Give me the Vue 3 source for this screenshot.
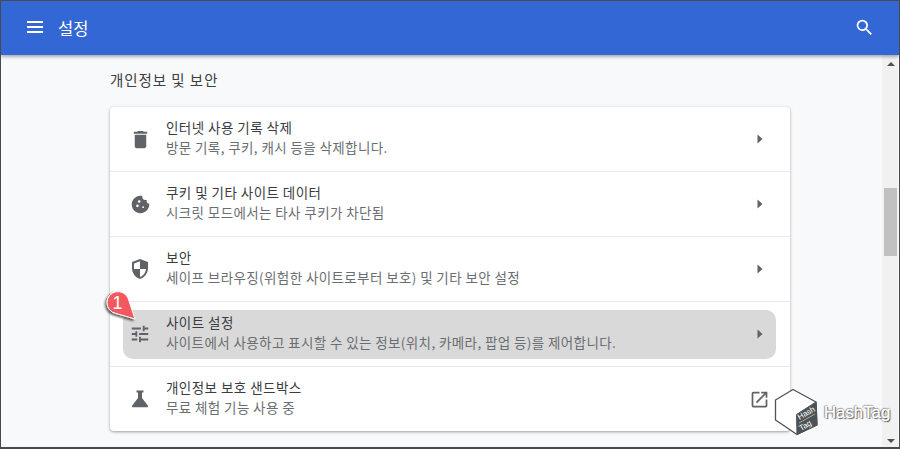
<script setup>
const rows = [
  { id: 'trash', title: '인터넷 사용 기록 삭제', sub: '방문 기록, 쿠키, 캐시 등을 삭제합니다.' },
  { id: 'cookie', title: '쿠키 및 기타 사이트 데이터', sub: '시크릿 모드에서는 타사 쿠키가 차단됨' },
  { id: 'shield', title: '보안', sub: '세이프 브라우징(위험한 사이트로부터 보호) 및 기타 보안 설정' },
  { id: 'tune', title: '사이트 설정', sub: '사이트에서 사용하고 표시할 수 있는 정보(위치, 카메라, 팝업 등)를 제어합니다.', active: true },
  { id: 'flask', title: '개인정보 보호 샌드박스', sub: '무료 체험 기능 사용 중', external: true },
]
</script>

<template>
  <div class="win">
    <header class="top">
      <svg class="menu" viewBox="0 0 16 12" width="16" height="12"><path d="M0 0h16v2H0zM0 5h16v2H0zM0 10h16v2H0z" fill="#fff"/></svg>
      <span class="heading">설정</span>
      <svg class="search" viewBox="0 0 24 24" width="21" height="21"><path d="M15.500 14h-.79l-.28-.27A6.470 6.470 0 0 0 16 9.500 6.500 6.500 0 1 0 9.500 16c1.610 0 3.090-.59 4.230-1.570l.27.28v.79l5 4.990L20.490 19l-4.990-5zm-6 0C7.010 14 5 11.990 5 9.500S7.010 5 9.500 5 14 7.010 14 9.500 11.990 14 9.500 14z" fill="#fff"/></svg>
    </header>
    <div class="body">
      <main class="content">
        <h2 class="section">개인정보 및 보안</h2>
        <section class="card">
          <div v-for="r in rows" :key="r.id" class="row">
            <div class="inner" :class="{ active: r.active }">
              <span class="icbox">
                <svg class="ic" :class="'ic-' + r.id" viewBox="0 0 24 24">
                  <path v-if="r.id === 'trash'" d="M6 19c0 1.100.9 2 2 2h8c1.100 0 2-.9 2-2V7H6v12zM19 4h-3.500l-1-1h-5l-1 1H5v2h14V4z"/>
                  <path v-else-if="r.id === 'cookie'" fill-rule="evenodd" d="M21.950 10.990c-1.790-.03-3.700-1.950-2.680-4.220-2.970 1-5.780-1.590-5.190-4.560C7.110.74 2 6.410 2 12c0 5.520 4.480 10 10 10 5.890 0 10.540-5.080 9.950-11.010zM8.500 15a1.500 1.500 0 1 1 0-3 1.500 1.500 0 0 1 0 3zm2-5a1.500 1.500 0 1 1 0-3 1.500 1.500 0 0 1 0 3zm4.500 6a1 1 0 1 1 0-2 1 1 0 0 1 0 2z"/>
                  <path v-else-if="r.id === 'shield'" fill-rule="evenodd" d="M12 2 4 5v6.090c0 5.050 3.410 9.760 8 10.910 4.590-1.150 8-5.860 8-10.910V5l-8-3zM12 4.200 6 6.400V12h6V4.200zM12 12v7.900c3.200-1 5.700-4.300 6-7.900h-6z"/>
                  <path v-else-if="r.id === 'tune'" d="M3 17v2h6v-2H3zM3 5v2h10V5H3zm10 16v-2h8v-2h-8v-2h-2v6h2zM7 9v2H3v2h4v2h2V9H7zm14 4v-2H11v2h10zm-6-4h2V7h4V5h-4V3h-2v6z"/>
                  <path v-else d="M8.500 3.500h7v2H14V11l5.800 7.500c.6.900 0 1.800-.8 1.800H5c-.8 0-1.400-.9-.8-1.800L10 11V5.500H8.500z"/>
                </svg>
              </span>
              <div class="text">
                <div class="title">{{ r.title }}</div>
                <div class="sub">{{ r.sub }}</div>
              </div>
              <svg v-if="r.external" class="ext" viewBox="0 0 24 24"><path d="M19 19H5V5h7V3H5a2 2 0 0 0-2 2v14a2 2 0 0 0 2 2h14c1.100 0 2-.9 2-2v-7h-2v7zM14 3v2h3.590l-9.830 9.830 1.410 1.410L19 6.410V10h2V3h-7z"/></svg>
              <svg v-else class="arrow" viewBox="0 0 8 10" width="8" height="10"><path d="M1.500 0.500 6.500 5 1.500 9.500z"/></svg>
            </div>
          </div>
        </section>
      </main>
      <aside class="scroll">
        <svg class="sa up" viewBox="0 0 10 5" width="8" height="4"><path d="M5 0 10 5H0z"/></svg>
        <div class="thumb"></div>
        <svg class="sa down" viewBox="0 0 10 5" width="8" height="4"><path d="M0 0h10L5 5z"/></svg>
      </aside>
    </div>
    <svg class="badge" viewBox="0 0 44 40" width="44" height="40">
      <defs>
        <filter id="bs" x="-30%" y="-30%" width="160%" height="160%"><feDropShadow dx="-1.500" dy="1.500" stdDeviation="1.200" flood-color="#000" flood-opacity=".7"/></filter>
      </defs>
      <path d="M6 14.500a11 11 0 0 1 21 -4.500 L34 31 L15 25.500 A11 11 0 0 1 6 14.500z" fill="#f4595f" stroke="#fff" stroke-width="1" stroke-linejoin="round" filter="url(#bs)"/>
      <text x="16.500" y="20.500" text-anchor="middle" class="num">1</text>
    </svg>
    <div class="mark">
      <svg viewBox="0 0 44 48" width="44" height="48">
        <path d="M19 1.500 1.500 12v20L23 46.500 43 37 42 14z" fill="#fff" stroke="#4d5254" stroke-width="1.300" stroke-linejoin="round"/>
        <path d="M22.500 26.500 42 14 43 37 23 46.500z" fill="#4d5254" stroke="#4d5254" stroke-linejoin="round"/>
        <text transform="translate(25.500 32) rotate(-30)" class="mk">Hash</text>
        <path d="M25 35 41 26" stroke="#fff" stroke-width=".5"/>
        <text transform="translate(27 43) rotate(-30)" class="mk">Tag</text>
      </svg>
      <span class="mtxt">HashTag</span>
    </div>
  </div>
</template>

<style scoped>
.win {
  position: relative;
  box-sizing: border-box;
  width: 900px;
  height: 449px;
  border: 1px solid #4a4a4a;
  border-bottom-width: 2px;
  display: flex;
  flex-direction: column;
  overflow: hidden;
  background: #f8f9fa;
  font-family: "Noto Sans CJK KR", "Noto Sans", sans-serif;
}
.top {
  position: relative;
  z-index: 2;
  height: 54px;
  flex: none;
  background: #3367d6;
  display: flex;
  align-items: center;
  padding: 0 24px 0 26px;
  box-shadow: 0 2px 3px rgba(0, 0, 0, .3);
}
.menu, .search { margin-bottom: 2px; }
.heading { margin-left: 15px; font-size: 16.500px; color: #fff; }
.search { margin-left: auto; }
.body { flex: 1; display: flex; min-height: 0; }
.content { flex: 1; padding: 0 92px 0 109px; min-width: 0; }
.section {
  margin: 15px 0 0;
  height: 37px;
  font-size: 14.500px;
  letter-spacing: .95px;
  font-weight: 400;
  line-height: 20px;
  color: #3c4043;
}
.card {
  background: #fff;
  border-radius: 4px;
  box-shadow: 0 1px 2px rgba(60, 64, 67, .3), 0 1px 3px 1px rgba(60, 64, 67, .15);
}
.row {
  box-sizing: border-box;
  height: 65px;
  padding: 8px 14px 7px 13px;
  border-top: 1px solid #e8eaed;
}
.row:first-child { border-top: 0; height: 64px; }
.inner {
  height: 49px;
  box-sizing: border-box;
  display: flex;
  align-items: center;
  padding: 0 12px 0 5px;
  border-radius: 10px;
}
.inner.active { background: #d9d9d9; }
.icbox { width: 24px; height: 24px; flex: none; display: flex; align-items: center; justify-content: center; margin-bottom: 1px; }
.ic { fill: #5f6368; flex: none; width: 24px; height: 24px; }
.ic-trash { width: 23px; height: 23px; }
.ic-cookie { width: 21px; height: 21px; }
.ic-tune { width: 22px; height: 22px; }
.text { margin-left: 14px; flex: 1; min-width: 0; padding-bottom: 6px; }
.title { font-size: 13.500px; letter-spacing: .45px; line-height: 20px; color: #3a3c3f; }
.sub { font-size: 13.500px; letter-spacing: .39px; line-height: 20px; color: #6a6e72; }
.arrow { fill: #5f6368; flex: none; margin-bottom: 2px; }
.ext { fill: #5f6368; flex: none; margin-right: -6px; width: 21px; height: 21px; }
.scroll {
  width: 16px;
  flex: none;
  margin-right: 1px;
  background: #f1f1f1;
  position: relative;
}
.thumb {
  position: absolute;
  top: 133px;
  left: 2px;
  width: 13px;
  height: 68px;
  background: #c1c1c1;
}
.sa { position: absolute; left: 5px; fill: #505050; }
.up { top: 7px; }
.down { bottom: 4px; }
.badge { position: absolute; left: 100px; top: 287px; z-index: 3; }
.num { font: 400 18px "Liberation Sans", sans-serif; fill: #fff; }
.mark {
  position: absolute;
  left: 773px;
  top: 387px;
  display: flex;
  align-items: center;
  gap: 6px;
}
.mk { font: 8px "Liberation Sans", sans-serif; fill: #fff; }
.mtxt {
  font: 400 16.800px "Liberation Sans", sans-serif;
  color: #fff;
  -webkit-text-stroke: .4px #fff;
  text-shadow: 1px 1px 1px #3c4043, -1px 0 1px #888, 0 -1px 1px #888;
  margin-top: 1px;
}
</style>
